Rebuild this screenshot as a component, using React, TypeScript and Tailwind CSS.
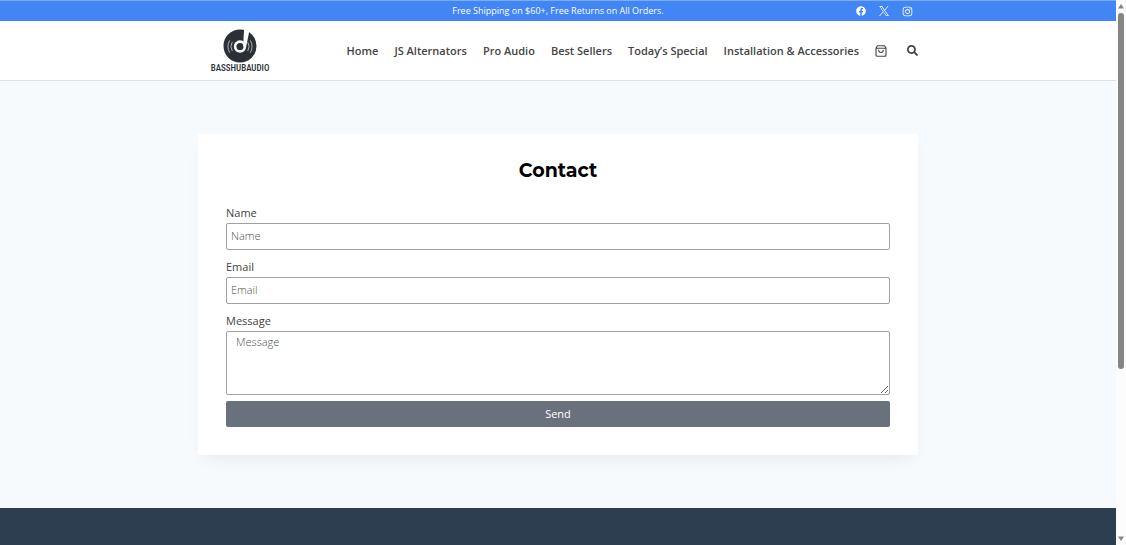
import type { ReactNode } from 'react';
import { FaFacebook, FaInstagram, FaSearch } from 'react-icons/fa';

const navLinks = [
  { href: '#home', label: 'Home' },
  { href: '#alternators', label: 'JS Alternators' },
  { href: '#pro-audio', label: 'Pro Audio' },
  { href: '#best-sellers', label: 'Best Sellers' },
  { href: '#special', label: 'Today’s Special' },
  { href: '#accessories', label: 'Installation & Accessories' },
];

const fieldClass =
  'block w-full rounded-xs border border-[#a0a0a0] bg-white text-[11px] leading-4 text-[#444] placeholder:font-light placeholder:text-[#505050] outline-none';

function XLogo() {
  return (
    <svg viewBox="0 0 24 24" className="size-2.5" fill="currentColor" aria-hidden="true">
      <path d="M14.3 10.2 23 0h-2.1l-7.6 8.8L7.3 0H.3l9.2 13.3L.3 24h2.1l8-9.4 6.4 9.4h7L14.3 10.2Zm-2.9 3.3-.9-1.3L3.1 1.6h3.2l6 8.6.9 1.3 7.8 11h-3.2l-6.4-9Z" />
    </svg>
  );
}

function BagIcon() {
  return (
    <svg viewBox="0 0 24 24" className="size-3" fill="none" stroke="currentColor" strokeWidth="2.2" strokeLinejoin="round" strokeLinecap="round" aria-hidden="true">
      <path d="M5 1.5h14l3 4.5v14.5a2 2 0 0 1-2 2H4a2 2 0 0 1-2-2V6l3-4.5ZM2 6.5h20M16.5 10.5a4.5 4.5 0 0 1-9 0" />
    </svg>
  );
}

function Logo() {
  return (
    <a href="#home" className="flex w-[60px] flex-col items-center text-[#2b2f36]">
      <svg viewBox="0 0 66 66" className="size-[34px]" aria-hidden="true">
        <circle cx="33" cy="33" r="32" fill="currentColor" />
        {/* Center label, open where the note stem runs into it */}
        <circle cx="33" cy="34" r="12" fill="#fff" />
        <circle cx="33" cy="34" r="7" fill="currentColor" />
        <path d="M41 0h11L45 34h-6Z" fill="#fff" />
        <g fill="none" stroke="#fff" strokeWidth="1.2">
          <path d="M18 25a18 18 0 0 0 0 18M13 22a24 24 0 0 0 0 24M48 43a18 18 0 0 0 0-18M53 46a24 24 0 0 0 0-24" />
        </g>
      </svg>
      <span className="font-['Liberation_Sans_Narrow','Roboto_Condensed','Roboto',sans-serif] text-[9px] leading-[10px] font-medium">
        BASSHUBAUDIO
      </span>
    </a>
  );
}

function Field({ id, label, children }: { id: string; label: string; children: ReactNode }) {
  return (
    <div>
      <label htmlFor={id} className="block pb-0.5 text-[11px] leading-4 text-[#444]">
        {label}
      </label>
      {children}
    </div>
  );
}

function Scrollbar() {
  return (
    <div className="flex w-2.5 shrink-0 flex-col items-center justify-between bg-[#fcfcfc] py-1" aria-hidden="true">
      <svg viewBox="0 0 6 5" className="h-[5px] w-1.5 shrink-0" fill="#858585">
        <path d="M3 0 6 4.5H0Z" />
      </svg>
      <div className="mt-1 flex w-1.5 flex-1 flex-col">
        <div className="h-[68%] rounded-full bg-[#858585]" />
      </div>
      <svg viewBox="0 0 6 5" className="h-[5px] w-1.5 shrink-0" fill="#858585">
        <path d="M3 5 0 .5h6Z" />
      </svg>
    </div>
  );
}

export default function App() {
  return (
    <div className="flex h-screen font-['Open_Sans','Noto_Sans',sans-serif]">
      <div className="flex min-w-0 flex-1 flex-col overflow-hidden bg-[#f6fafd]">
        {/* Announcement bar */}
        <div className="border-t border-[#78aefa] bg-[#4285f4] text-white">
          <div className="mx-auto grid h-5 max-w-[720px] grid-cols-[1fr_auto_1fr] items-center px-[5px]">
            <p className="col-start-2 text-[9px] leading-4">Free Shipping on $60+, Free Returns on All Orders.</p>
            <div className="flex items-center justify-end gap-[13px]">
              <a href="#facebook" aria-label="Facebook"><FaFacebook className="size-2.5" /></a>
              <a href="#x" aria-label="X"><XLogo /></a>
              <a href="#instagram" aria-label="Instagram"><FaInstagram className="size-[11px]" /></a>
            </div>
          </div>
        </div>

        <header className="border-b border-[#dce1e5] bg-white">
          <div className="mx-auto flex h-[59px] max-w-[720px] items-center justify-between pl-3">
            <Logo />
            <nav className="flex items-center gap-4 text-[11px] leading-4 font-semibold text-[#444]">
              {navLinks.map((l) => (
                <a key={l.href} href={l.href} className="whitespace-nowrap">
                  {l.label}
                </a>
              ))}
              <div className="flex items-center gap-5">
                <button type="button" aria-label="Cart"><BagIcon /></button>
                <button type="button" aria-label="Search"><FaSearch className="size-[11px]" /></button>
              </div>
            </nav>
          </div>
        </header>

        <main className="px-4 py-[53px]">
          <section className="mx-auto max-w-[720px] rounded-xs bg-white px-7 pt-[27px] pb-7 shadow-[0_8px_16px_-6px_rgba(0,0,0,0.08)]">
            <h1 className="text-center font-['Montserrat','Inter',sans-serif] text-[19px] leading-5 font-bold text-black">Contact</h1>
            <form className="mt-6" onSubmit={(e) => e.preventDefault()}>
              <div className="flex flex-col gap-[9px]">
                <Field id="name" label="Name">
                  <input id="name" type="text" placeholder="Name" className={`${fieldClass} h-[27px] px-1 pb-0.5`} />
                </Field>
                <Field id="email" label="Email">
                  <input id="email" type="email" placeholder="Email" className={`${fieldClass} h-[27px] px-1 pb-0.5`} />
                </Field>
                <Field id="message" label="Message">
                  <textarea id="message" placeholder="Message" className={`${fieldClass} h-16 resize-y px-[9px] py-0.5`} />
                </Field>
              </div>
              <button type="submit" className="mt-1.5 h-[26px] w-full rounded-xs bg-[#69717d] text-[11px] leading-4 text-white">
                Send
              </button>
            </form>
          </section>
        </main>

        <footer className="flex-1 bg-[#2d3e50]" />
      </div>
      <Scrollbar />
    </div>
  );
}
